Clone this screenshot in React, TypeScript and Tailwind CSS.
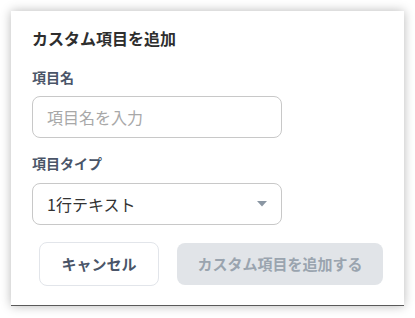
import React from "react";

export default function App() {
  return (
    <div className="w-[415px] h-[318px] bg-white overflow-hidden" style={{ fontFamily: '"Noto Sans CJK JP", "Noto Sans", sans-serif' }}>
      <div className="ml-[11px] mt-[11px] w-[393px] h-[295px] bg-white border-b border-[#5a5a5a] shadow-[0_0_10px_rgba(0,0,0,0.28)] px-[21px] pt-[15px] flex flex-col">
        <div className="h-6 leading-6 text-[16px] font-bold text-[#2e2e2e]">カスタム項目を追加</div>
        <div className="mt-[17px] h-5 leading-5 text-[14px] font-bold text-[#4a5568]">項目名</div>
        <div className="mt-[9px] w-[250px] h-[42px] rounded-[8px] border border-[#c8c8c8] flex items-center pl-[14px] text-[16px] text-[#a8a8a8]">
          項目名を入力
        </div>
        <div className="mt-[15px] h-5 leading-5 text-[14px] font-bold text-[#4a5568]">項目タイプ</div>
        <div className="mt-[10px] w-[250px] h-[42px] rounded-[8px] border border-[#c8c8c8] flex items-center justify-between pl-[14px] pr-[14px] text-[16px] text-[#333333]">
          <span>1行テキスト</span>
          <svg width="10" height="6" viewBox="0 0 10 6"><path d="M0 0 L10 0 L5 5.5 Z" fill="#8a96a3" /></svg>
        </div>
        <div className="mt-[17px] flex justify-end items-center gap-[18px]">
          <div className="w-[120px] h-[44px] rounded-[8px] border border-[#e2e5ea] flex items-center justify-center text-[15px] font-bold text-[#4a5568]">
            キャンセル
          </div>
          <div className="w-[206px] h-[42px] rounded-[8px] bg-[#e1e4e8] flex items-center justify-center text-[15px] font-bold text-[#9aa4af]">
            カスタム項目を追加する
          </div>
        </div>
      </div>
    </div>
  );
}
